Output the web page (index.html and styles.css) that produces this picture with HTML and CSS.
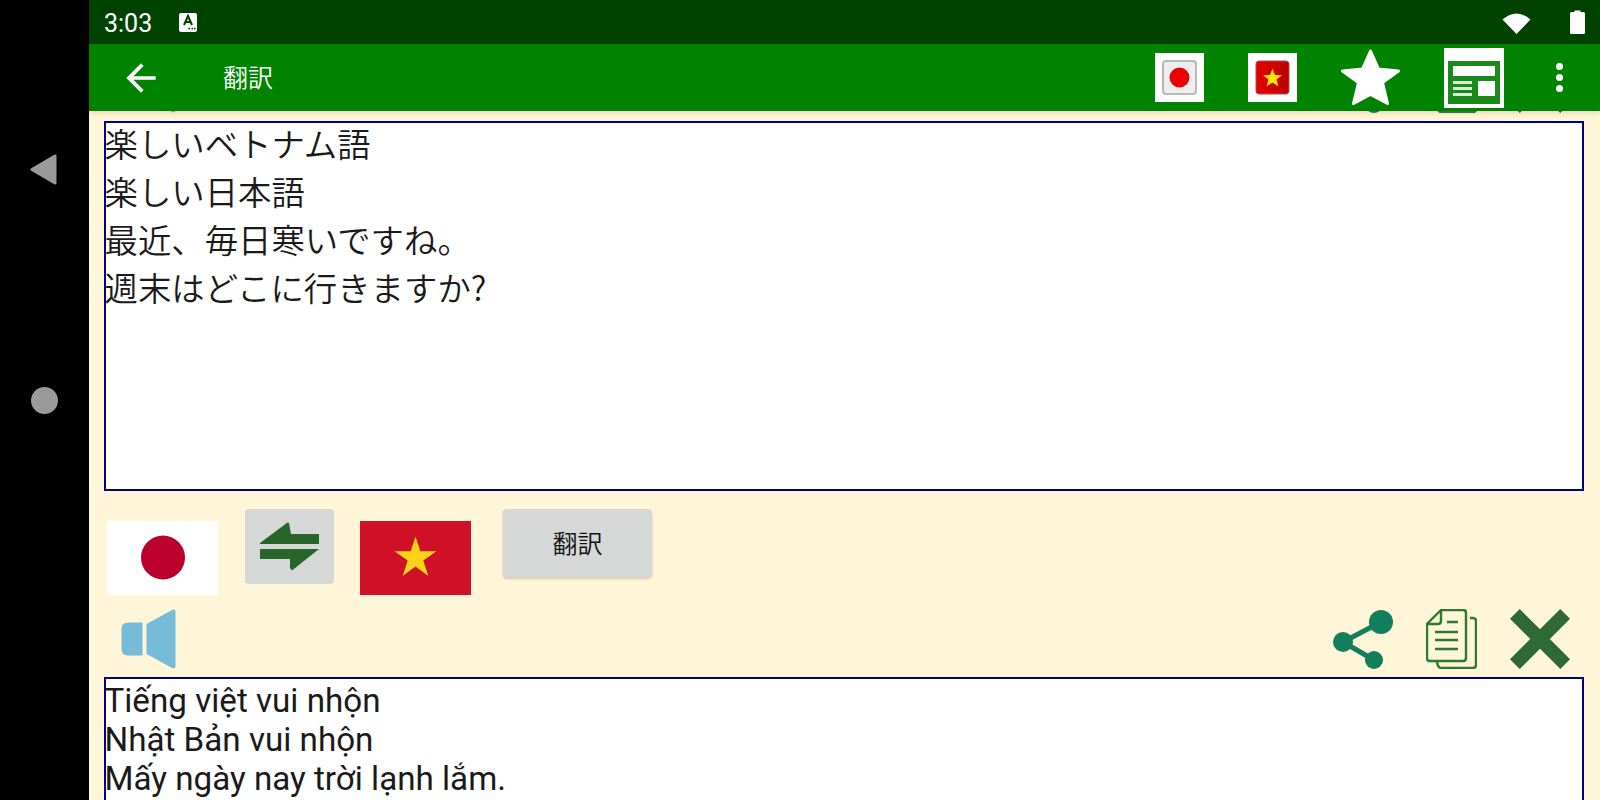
FILE: index.html
```html
<!DOCTYPE html>
<html lang="ja">
  <head>
    <meta charset="UTF-8" />
    <meta name="viewport" content="width=device-width, initial-scale=1.0" />
    <title>翻訳</title>
    <link rel="stylesheet" href="styles.css">
  </head>
  <body>
    <svg class="defs" width="0" height="0">
      <symbol id="speaker" viewBox="0 0 55 60">
        <path d="M21.5 13.5 V46.5 H7 Q0.5 46.5 0.5 40 V20 Q0.5 13.5 7 13.5 Z" fill="#76bbd8" />
        <path d="M25.5 15 L51 1 Q54.5 -0.5 54.5 3 V57 Q54.5 60.5 51 59 L25.5 45 Z" fill="#76bbd8" />
      </symbol>
      <symbol id="share" viewBox="0 0 60 60">
        <path d="M10 33 L48 13 M10 33 L41 51" stroke="#117e5c" stroke-width="5" fill="none" />
        <circle cx="48" cy="13" r="12" fill="#117e5c" />
        <circle cx="10" cy="33" r="10" fill="#117e5c" />
        <circle cx="41" cy="51" r="9" fill="#117e5c" />
      </symbol>
      <symbol id="copy" viewBox="0 0 51 60">
        <g fill="none" stroke="#2f7a30" stroke-width="2.4">
          <path d="M44 9 H47 Q50 9 50 12 V56 Q50 59 47 59 H15 Q12 59 11 53" />
          <path d="M15 1 H37 Q40 1 40 4 V49 Q40 52 37 52 H4 Q1 52 1 49 V15 Z" />
          <path d="M15 1 V12 Q15 15 12 15 H1" />
          <path d="M21 13 H32 M9 23 H32 M9 31 H32 M9 40 H32" />
        </g>
      </symbol>
      <symbol id="cross" viewBox="0 0 60 60">
        <path d="M8 8 L52 52 M52 8 L8 52" stroke="#2d6a35" stroke-width="15" stroke-linecap="square" fill="none" transform="translate(30 30) scale(.92) translate(-30 -30)" />
      </symbol>
    </svg>

    <nav class="sysnav">
      <svg class="nav-back" width="27" height="31" viewBox="0 0 27 31">
        <path d="M2 15.5 L25 2 V29 Z" fill="#9a9a9a" stroke="#9a9a9a" stroke-width="3" stroke-linejoin="round" />
      </svg>
      <div class="nav-home"></div>
    </nav>

    <div class="main">
      <div class="statusbar">
        <span class="time">3:03</span>
        <svg class="status-a" width="18" height="19" viewBox="0 0 18 19">
          <rect width="18" height="19" rx="2" fill="#fff" />
          <path d="M5 12 L9 3 L13 12 M6.5 9 H11.5" stroke="#004000" stroke-width="2" fill="none" />
          <path d="M9.5 15.5 H11 M12.5 15.5 H14 M15 15.5 H16.5" stroke="#004000" stroke-width="1.5" />
        </svg>
        <svg class="status-wifi" width="29" height="23" viewBox="0 0 29 23">
          <path d="M0.5 8.5 Q14.5 -3.5 28.5 8.5 L14.5 23 Z" fill="#fff" />
        </svg>
        <svg class="status-batt" width="15" height="24" viewBox="0 0 15 24">
          <path d="M4.5 0.5 H10.5 V2 H13.5 Q15 2 15 3.5 V22.5 Q15 24 13.5 24 H1.5 Q0 24 0 22.5 V3.5 Q0 2 1.5 2 H4.5 Z" fill="#fff" />
        </svg>
      </div>

      <header class="toolbar">
        <svg class="back" width="44" height="44" viewBox="0 0 24 24">
          <path d="M20 11H7.83l5.59-5.59L12 4l-8 8 8 8 1.41-1.41L7.83 13H20v-2z" fill="#fff" />
        </svg>
        <span class="title">翻訳</span>

        <div class="mini-flag mini-first">
          <svg width="35" height="35" viewBox="0 0 35 35">
            <rect x="1" y="1" width="33" height="33" rx="3" fill="#eeeeee" stroke="#b8b8b8" stroke-width="2" />
            <circle cx="17.5" cy="17.5" r="10" fill="#ea0000" />
          </svg>
        </div>
        <div class="mini-flag">
          <svg width="35" height="35" viewBox="0 0 35 35">
            <defs>
              <linearGradient id="vnmini" x1="0" x2="1" y1="0" y2="0">
                <stop offset="0" stop-color="#e60000" />
                <stop offset="1" stop-color="#bb0000" />
              </linearGradient>
            </defs>
            <rect x="1" y="1" width="33" height="33" rx="3" fill="url(#vnmini)" stroke="#a85050" stroke-width="1" />
            <path d="M17.5 8.5 L20 15 L27 15.2 L21.5 19.5 L23.5 26.5 L17.5 22.5 L11.5 26.5 L13.5 19.5 L8 15.2 L15 15 Z" fill="#ffe600" />
          </svg>
        </div>
        <svg class="fav" width="61" height="57" viewBox="0 0 61 57">
          <path d="M30.5 2 L38.5 20 L58.5 22 L42.5 33.5 L47.5 54.5 L30.5 45.5 L13.5 54.5 L18.5 33.5 L2.5 22 L22.5 20 Z" fill="#fff" stroke="#fff" stroke-width="3" stroke-linejoin="round" />
        </svg>
        <div class="news">
          <div class="news-inner">
            <div class="news-head"></div>
            <div class="news-body">
              <div class="news-lines"><span></span><span></span><span></span></div>
              <div class="news-pic"></div>
            </div>
          </div>
        </div>
        <div class="dots"><span></span><span></span><span></span></div>
      </header>

      <div class="content">
        <div class="actions actions-scrolled">
          <svg class="speaker"><use href="#speaker" /></svg>
          <svg class="share"><use href="#share" /></svg>
          <svg class="copy"><use href="#copy" /></svg>
          <svg class="cross"><use href="#cross" /></svg>
        </div>

        <div class="textbox source">
          <div>楽しいベトナム語</div>
          <div>楽しい日本語</div>
          <div>最近、毎日寒いですね。</div>
          <div>週末はどこに行きますか?</div>
        </div>

        <div class="controls">
          <svg class="flag flag-jp" width="111" height="74" viewBox="0 0 111 74">
            <rect width="111" height="74" fill="#fff" />
            <circle cx="56" cy="36.5" r="22" fill="#bc002d" />
          </svg>
          <div class="swap">
            <svg width="60" height="49" viewBox="0 0 60 49">
              <path d="M0 21 L27.5 0.5 L29 1 L31 12 H59 V22 H0 Z" fill="#27662b" />
              <path d="M0 27 H59 L32 48.5 L30 46 V37 H0 Z" fill="#27662b" />
            </svg>
          </div>
          <svg class="flag flag-vn" width="111" height="74" viewBox="0 0 111 74">
            <rect width="111" height="74" fill="#ce1126" />
            <path d="M55.5 15.5 L60.3 30.3 L76.5 30.3 L63.3 39.6 L68.3 55 L55.5 45.5 L42.7 55 L47.7 39.6 L34.5 30.3 L50.7 30.3 Z" fill="#fcd116" />
          </svg>
          <button class="translate">翻訳</button>
        </div>

        <div class="actions">
          <svg class="speaker"><use href="#speaker" /></svg>
          <svg class="share"><use href="#share" /></svg>
          <svg class="copy"><use href="#copy" /></svg>
          <svg class="cross"><use href="#cross" /></svg>
        </div>

        <div class="textbox result">
          <div>Tiếng việt vui nhộn</div>
          <div>Nhật Bản vui nhộn</div>
          <div>Mấy ngày nay trời lạnh lắm.</div>
        </div>
      </div>
    </div>
  </body>
</html>
```

FILE: styles.css
```css
* {
  padding: 0;
  margin: 0;
  box-sizing: border-box;
}
html,
body {
  height: 800px;
  overflow: hidden;
}
body {
  display: flex;
  background-color: #000;
  font-family: Roboto, "Noto Sans CJK JP", sans-serif;
}
.defs {
  position: absolute;
}

/* system nav */
.sysnav {
  width: 89px;
  flex: none;
  display: flex;
  flex-direction: column;
  align-items: center;
  padding-top: 154px;
}
.nav-back {
  margin-right: 3px;
}
.nav-home {
  width: 27px;
  height: 27px;
  margin-top: 202px;
  border-radius: 50%;
  background-color: #9a9a9a;
}

.main {
  flex: 1;
  display: flex;
  flex-direction: column;
  min-width: 0;
  background-color: #fff5d9;
}

/* status bar */
.statusbar {
  height: 44px;
  flex: none;
  display: flex;
  align-items: center;
  padding-left: 15px;
  background-color: #004200;
  color: #fff;
}
.time {
  font-size: 25px;
  width: 75px;
  padding-top: 2px;
}
.status-wifi {
  margin-left: auto;
}
.status-batt {
  margin-left: 39px;
  margin-right: 15px;
}

/* toolbar */
.toolbar {
  height: 67px;
  flex: none;
  display: flex;
  align-items: center;
  position: relative;
  z-index: 2;
  padding-left: 30px;
  background-color: #008300;
  box-shadow: 0 2px 5px rgba(120, 90, 20, 0.18);
  color: #fff;
}
.back {
  flex: none;
}
.title {
  margin-left: 60px;
  padding-bottom: 4px;
  font-family: "Noto Sans CJK JP", sans-serif;
  font-size: 25px;
  font-weight: 350;
}
.mini-flag {
  width: 49px;
  height: 49px;
  margin-left: 44px;
  display: flex;
  align-items: center;
  justify-content: center;
  background-color: #fff;
}
.mini-first {
  margin-left: auto;
}
.fav {
  margin-left: 43px;
  flex: none;
}
.news {
  width: 60px;
  height: 60px;
  margin-left: 43px;
  padding: 13px 4px 4px;
  background-color: #fff;
}
.news-inner {
  height: 100%;
  padding: 5px;
  display: flex;
  flex-direction: column;
  gap: 5px;
  background-color: #1b8a1b;
}
.news-head {
  height: 10px;
  background-color: #fff;
}
.news-body {
  flex: 1;
  display: flex;
  justify-content: space-between;
}
.news-lines {
  width: 19px;
  display: flex;
  flex-direction: column;
  gap: 3px;
}
.news-lines span {
  height: 3px;
  background-color: #d8efd8;
}
.news-pic {
  width: 17px;
  height: 15px;
  background-color: #fff;
}
.dots {
  margin-left: 52px;
  margin-right: 37px;
  display: flex;
  flex-direction: column;
  gap: 4px;
}
.dots span {
  width: 7px;
  height: 7px;
  border-radius: 50%;
  background-color: #fff;
}

/* content */
.content {
  flex: 1;
  min-height: 0;
  overflow: hidden;
  padding: 0 16px 0 15px;
}
.actions {
  height: 60px;
  margin-top: 14px;
  display: flex;
  align-items: flex-start;
  padding-left: 17px;
}
.actions-scrolled {
  margin-top: -58px;
}
.actions svg {
  height: 60px;
  flex: none;
}
.speaker {
  width: 55px;
}
.share {
  width: 60px;
  margin-left: auto;
}
.copy {
  width: 51px;
  margin-left: 33px;
}
.cross {
  width: 60px;
  margin-left: 33px;
  margin-right: 14px;
}
.textbox {
  margin-top: 8px;
  border: 2px solid #000080;
  background-color: #fff;
  color: #000;
  text-indent: -1.5px;
}
.source {
  height: 370px;
  font-family: "Noto Sans CJK JP", sans-serif;
  font-size: 33.4px;
  font-weight: 350;
  color: #1a1a1a;
}
.source div {
  line-height: 40px;
  padding-bottom: 8px;
}
.result {
  height: 200px;
  font-size: 33.2px;
  line-height: 38.8px;
  padding-top: 3px;
  color: #1a1a1a;
}
.controls {
  margin-top: 18px;
  height: 86px;
  display: flex;
  align-items: flex-start;
  padding-left: 3px;
}
.flag {
  flex: none;
  margin-top: 12px;
}
.swap {
  width: 89px;
  height: 75px;
  margin: 0 26px 0 27px;
  display: flex;
  align-items: center;
  justify-content: center;
  border-radius: 4px;
  background-color: #d6d7d7;
}
.translate {
  width: 149px;
  height: 68px;
  margin-left: 32px;
  padding-bottom: 2px;
  border: none;
  border-radius: 4px;
  background-color: #d6d7d7;
  box-shadow: 0 2px 3px rgba(0, 0, 0, 0.18);
  color: #111;
  font-family: "Noto Sans CJK JP", sans-serif;
  font-size: 25px;
  font-weight: 350;
}
```
